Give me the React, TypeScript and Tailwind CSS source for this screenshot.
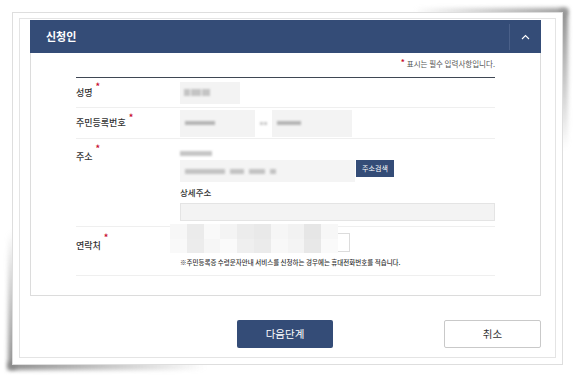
import React from "react";

const F = "font-['Noto_Sans_CJK_KR','Noto_Sans',sans-serif]";

function Star() {
  return <span className="relative -top-[6px] ml-[3px] text-[9px] font-bold leading-none text-[#c8102e]">*</span>;
}

function Bars({ widths, gap = 4, h = 5, color = "#b9b9b9" }: { widths: number[]; gap?: number; h?: number; color?: string }) {
  return (
    <div className="flex items-center blur-[1px]" style={{ gap }}>
      {widths.map((w, i) => (
        <div key={i} style={{ width: w, height: h, background: color }} />
      ))}
    </div>
  );
}

const mosaicTop = ["#f7f7f7", "#ebebeb", "#f9f9f9", "#f4f4f4", "#ececec", "#e9e9e9", "#f6f6f6", "#f2f2f2", "#e6e6e6", "#f7f7f7"];
const mosaicBot = ["#f9f9f9", "#ececec", "#f6f6f6", "#fafafa", "#efefef", "#ebebeb", "#f8f8f8", "#f4f4f4", "#e8e8e8", "#fafafa"];

export default function App() {
  return (
    <div className={`relative z-0 w-[576px] h-[378px] bg-white pt-[12px] pl-[12px] ${F}`}>
      <div className="relative w-[551px] h-[353px] bg-white border border-[#dedede] pt-[5px] px-[6px] pb-[6px]">
        {/* curl shadows */}
        <div className="absolute -z-10 left-[-5px] top-[62%] bottom-[-5px] w-[8px] blur-[2px] bg-gradient-to-b from-transparent to-[#8a8a8a]" />
        <div className="absolute -z-10 left-[-5px] bottom-[-6px] h-[8px] w-[36%] blur-[2px] bg-gradient-to-r from-[#8a8a8a] to-transparent" />
        <div className="absolute -z-10 right-[-6px] top-[-4px] h-[40%] w-[8px] blur-[2px] bg-gradient-to-t from-transparent to-[#8a8a8a]" />
        <div className="absolute -z-10 right-[-5px] top-[-5px] w-[28%] h-[7px] blur-[2px] bg-gradient-to-l from-[#9a9a9a] to-transparent" />

        <div className="w-full h-full border border-[#e4e4e4] pt-[1px] pl-[10px] pr-[14px] flex flex-col">
          {/* card */}
          <div className="w-[511px]">
            <div className="h-[33px] bg-[#344c77] flex items-center justify-between">
              <span className="pl-[16px] text-[11px] font-bold text-white">신청인</span>
              <div className="flex items-center h-full">
                <div className="w-px h-[26px] bg-[#4a6089]" />
                <div className="w-[31px] flex justify-center">
                  <svg width="9" height="6" viewBox="0 0 9 6" fill="none">
                    <path d="M1 5 L4.5 1.5 L8 5" stroke="#ffffff" strokeWidth="1.1" />
                  </svg>
                </div>
              </div>
            </div>
            <div className="h-[243px] border-x border-b border-[#dcdcdc] px-[45px] pt-[6px]">
              <div className="flex justify-end items-center h-[10px] text-[7.5px] text-[#555]">
                <span className="relative -top-[2px] mr-[2px] text-[8px] font-bold leading-none text-[#c8102e]">*</span>
                표시는 필수 입력사항입니다.
              </div>
              <div className="mt-[8px] border-t border-[#3f4754] text-[9px] text-[#333]">
                {/* 성명 */}
                <div className="h-[30px] flex items-center border-b border-[#efefef]">
                  <div className="w-[104px] flex items-center font-medium">성명<Star /></div>
                  <div className="w-[60px] h-[22px] bg-[#f3f3f3] flex items-center pl-[4px]">
                    <Bars widths={[6, 10, 8]} gap={1} h={7} color="#c4c4c4" />
                  </div>
                </div>
                {/* 주민등록번호 */}
                <div className="h-[31px] flex items-center border-b border-[#efefef]">
                  <div className="w-[104px] flex items-center font-medium">주민등록번호<Star /></div>
                  <div className="w-[75px] h-[27px] bg-[#f3f3f3] flex items-center pl-[5px]">
                    <Bars widths={[30]} h={4} color="#b5b5b5" />
                  </div>
                  <div className="w-[17px] flex justify-center">
                    <Bars widths={[3, 3]} gap={1} h={3} color="#c9c9c9" />
                  </div>
                  <div className="w-[80px] h-[27px] bg-[#f3f3f3] flex items-center pl-[5px]">
                    <Bars widths={[24]} h={4} color="#b5b5b5" />
                  </div>
                </div>
                {/* 주소 */}
                <div className="h-[88px] flex border-b border-[#efefef]">
                  <div className="w-[104px] pt-[11px] font-medium flex items-start">주소<Star /></div>
                  <div className="flex-1 pt-[7px]">
                    <div className="h-[14px] flex items-center">
                      <Bars widths={[10, 14, 8]} gap={0} h={5} color="#c6c6c6" />
                    </div>
                    <div className="flex items-start">
                      <div className="w-[175px] h-[22px] bg-[#f4f4f4] flex items-center pl-[5px]">
                        <Bars widths={[40, 14, 16, 6]} gap={5} h={5} color="#c3c3c3" />
                      </div>
                      <div className="ml-[1px] w-[38px] h-[17px] bg-[#344c77] text-white text-[7px] flex items-center justify-center">주소검색</div>
                    </div>
                    <div className="mt-[3px] h-[14px] flex items-center text-[8.5px] font-medium">상세주소</div>
                    <div className="mt-[4px] w-[315px] h-[18px] bg-[#f3f3f3] border border-[#e4e4e4]" />
                  </div>
                </div>
                {/* 연락처 */}
                <div className="h-[49px] flex border-b border-[#efefef]">
                  <div className="w-[104px] pt-[12px] font-medium flex items-start">연락처<Star /></div>
                  <div className="flex-1 pt-[6px] relative">
                    <div className="w-[170px] h-[19px] border border-[#dcdcdc] bg-white" />
                    <div className="mt-[6px] text-[6.5px] leading-[8px] font-medium text-[#333]">※주민등록증 수령문자안내 서비스를 신청하는 경우에는 휴대전화번호를 적습니다.</div>
                    <div className="absolute left-[-10px] top-[-3px] w-[168px] h-[29px] flex flex-col blur-[0.5px]">
                      <div className="flex h-[15px]">
                        {mosaicTop.map((c, i) => (
                          <div key={i} className="flex-1" style={{ background: c }} />
                        ))}
                      </div>
                      <div className="flex h-[14px]">
                        {mosaicBot.map((c, i) => (
                          <div key={i} className="flex-1" style={{ background: c }} />
                        ))}
                      </div>
                    </div>
                  </div>
                </div>
              </div>
            </div>
          </div>
          {/* buttons */}
          <div className="mt-[24px] flex items-center">
            <div className="ml-[207px] w-[96px] h-[28px] rounded-[2px] bg-[#344c77] text-white text-[10.5px] flex items-center justify-center">다음단계</div>
            <div className="ml-[111px] w-[97px] h-[28px] rounded-[2px] bg-white border border-[#c9c9c9] text-[#333] text-[10.5px] flex items-center justify-center">취소</div>
          </div>
        </div>
      </div>
    </div>
  );
}
